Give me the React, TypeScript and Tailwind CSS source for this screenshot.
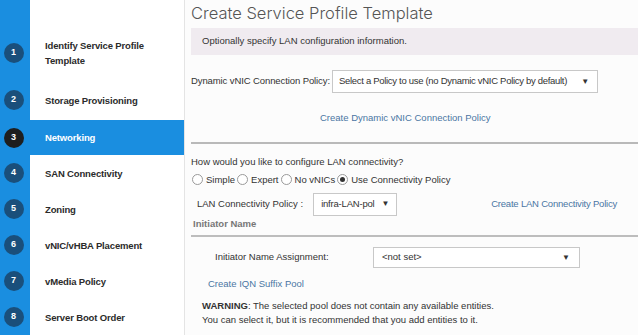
import React from 'react'

const steps = [
  { n: 1, label: 'Identify Service Profile Template', h: 'h-[36px]', mt: 'mt-[35px]' },
  { n: 2, label: 'Storage Provisioning', h: 'h-[36px]', mt: 'mt-[11px]' },
  { n: 3, label: 'Networking', h: 'h-[35px]', mt: 'mt-[2px]', active: true },
  { n: 4, label: 'SAN Connectivity', h: 'h-[36px]', mt: '' },
  { n: 5, label: 'Zoning', h: 'h-[36px]', mt: '' },
  { n: 6, label: 'vNIC/vHBA Placement', h: 'h-[36px]', mt: '' },
  { n: 7, label: 'vMedia Policy', h: 'h-[36px]', mt: '' },
  { n: 8, label: 'Server Boot Order', h: 'h-[36px]', mt: '' },
]

function Caret() {
  return <span className="text-[8px] leading-none text-[#333]">▼</span>
}

function Radio({ label, checked }: { label: string; checked?: boolean }) {
  return (
    <label className="flex items-center gap-[3px]">
      <span className="flex h-[11px] w-[11px] items-center justify-center rounded-full border border-[#9a9a9a] bg-white">
        {checked && <span className="h-[5px] w-[5px] rounded-full bg-[#333]" />}
      </span>
      <span>{label}</span>
    </label>
  )
}

export default function App() {
  return (
    <div className="flex h-[335px] w-[638px] overflow-hidden bg-white font-['Liberation_Sans',Arial,sans-serif] text-[#333]">
      {/* sidebar */}
      <aside className="relative w-[184px] shrink-0 bg-white">
        <div className="absolute inset-y-0 left-0 w-[30px] bg-[#1a8ee0]" />
        <div className="relative flex flex-col">
          {steps.map((s) => (
            <div key={s.n} className={`flex items-center ${s.h} ${s.mt}`}>
              <div className="flex w-[30px] justify-center">
                <span
                  className={`-ml-[3px] flex h-[20px] w-[20px] items-center justify-center rounded-full text-[9px] font-bold text-white ${
                    s.active ? 'bg-[#1e1e1e]' : 'bg-[#1a4f7b]'
                  }`}
                >
                  {s.n}
                </span>
              </div>
              <div
                className={`flex h-full flex-1 items-center pl-[15px] pr-2 text-[9.5px] font-bold leading-[15px] tracking-[-0.15px] ${
                  s.active ? 'my-[3px] h-[29px] bg-[#1a8ee0] text-white' : 'text-[#2b2b2b]'
                }`}
              >
                <span className={s.n === 1 ? 'w-[104px]' : ''}>{s.label}</span>
              </div>
            </div>
          ))}
        </div>
      </aside>

      {/* main */}
      <main className="flex-1 border-l border-[#e4e4e4] bg-[#fcfcfc] pl-[6px] text-[9.5px]">
        <h1 className="mt-[3px] font-['Inter',sans-serif] text-[16.5px] font-light leading-[20px] text-[#555]">
          Create Service Profile Template
        </h1>
        <div className="mt-[5px] flex h-[27px] items-center bg-[#f0ebf0] pl-[11px]">
          Optionally specify LAN configuration information.
        </div>

        <div className="mt-[15px] flex items-center">
          <span className="tracking-[-0.1px]">Dynamic vNIC Connection Policy:</span>
          <div className="ml-[2px] flex h-[23px] w-[266px] items-center justify-between whitespace-nowrap border border-[#c8c8c8] bg-white pl-[6px] pr-[8px] tracking-[-0.3px]">
            <span>Select a Policy to use (no Dynamic vNIC Policy by default)</span>
            <Caret />
          </div>
        </div>

        <div className="mt-[18px] pl-[129px] text-[#4a76a3]">Create Dynamic vNIC Connection Policy</div>

        <div className="mt-[17px] h-[2px] bg-[#b9b9b9]" />

        <div className="mt-[11px]">How would you like to configure LAN connectivity?</div>
        <div className="mt-[3px] flex items-center gap-[2px] pl-[1px]">
          <Radio label="Simple" />
          <Radio label="Expert" />
          <Radio label="No vNICs" />
          <Radio label="Use Connectivity Policy" checked />
        </div>

        <div className="mt-[6px] flex items-center">
          <span className="pl-[6px]">LAN Connectivity Policy :</span>
          <div className="ml-[10px] flex h-[23px] w-[84px] items-center justify-between whitespace-nowrap border border-[#c8c8c8] bg-white pl-[7px] pr-[7px] tracking-[-0.2px]">
            <span>infra-LAN-pol</span>
            <Caret />
          </div>
          <span className="ml-[94px] tracking-[-0.2px] text-[#4a76a3]">Create LAN Connectivity Policy</span>
        </div>

        <div className="mt-[1px] pl-[2px] font-bold text-[#777]">Initiator Name</div>
        <div className="mt-[4px] h-[2px] bg-[#bdbdbd]" />

        <div className="mt-[10px] flex items-center">
          <span className="w-[182px] pl-[24px]">Initiator Name Assignment:</span>
          <div className="flex h-[21px] w-[207px] items-center justify-between border border-[#c8c8c8] bg-white pl-[8px] pr-[9px]">
            <span>&lt;not set&gt;</span>
            <Caret />
          </div>
        </div>

        <div className="mt-[9px] pl-[17px] text-[#4a76a3]">Create IQN Suffix Pool</div>

        <div className="mt-[8px] pl-[11px] leading-[14px]">
          <div>
            <span className="font-bold">WARNING</span>: The selected pool does not contain any available entities.
          </div>
          <div>You can select it, but it is recommended that you add entities to it.</div>
        </div>
      </main>
    </div>
  )
}
